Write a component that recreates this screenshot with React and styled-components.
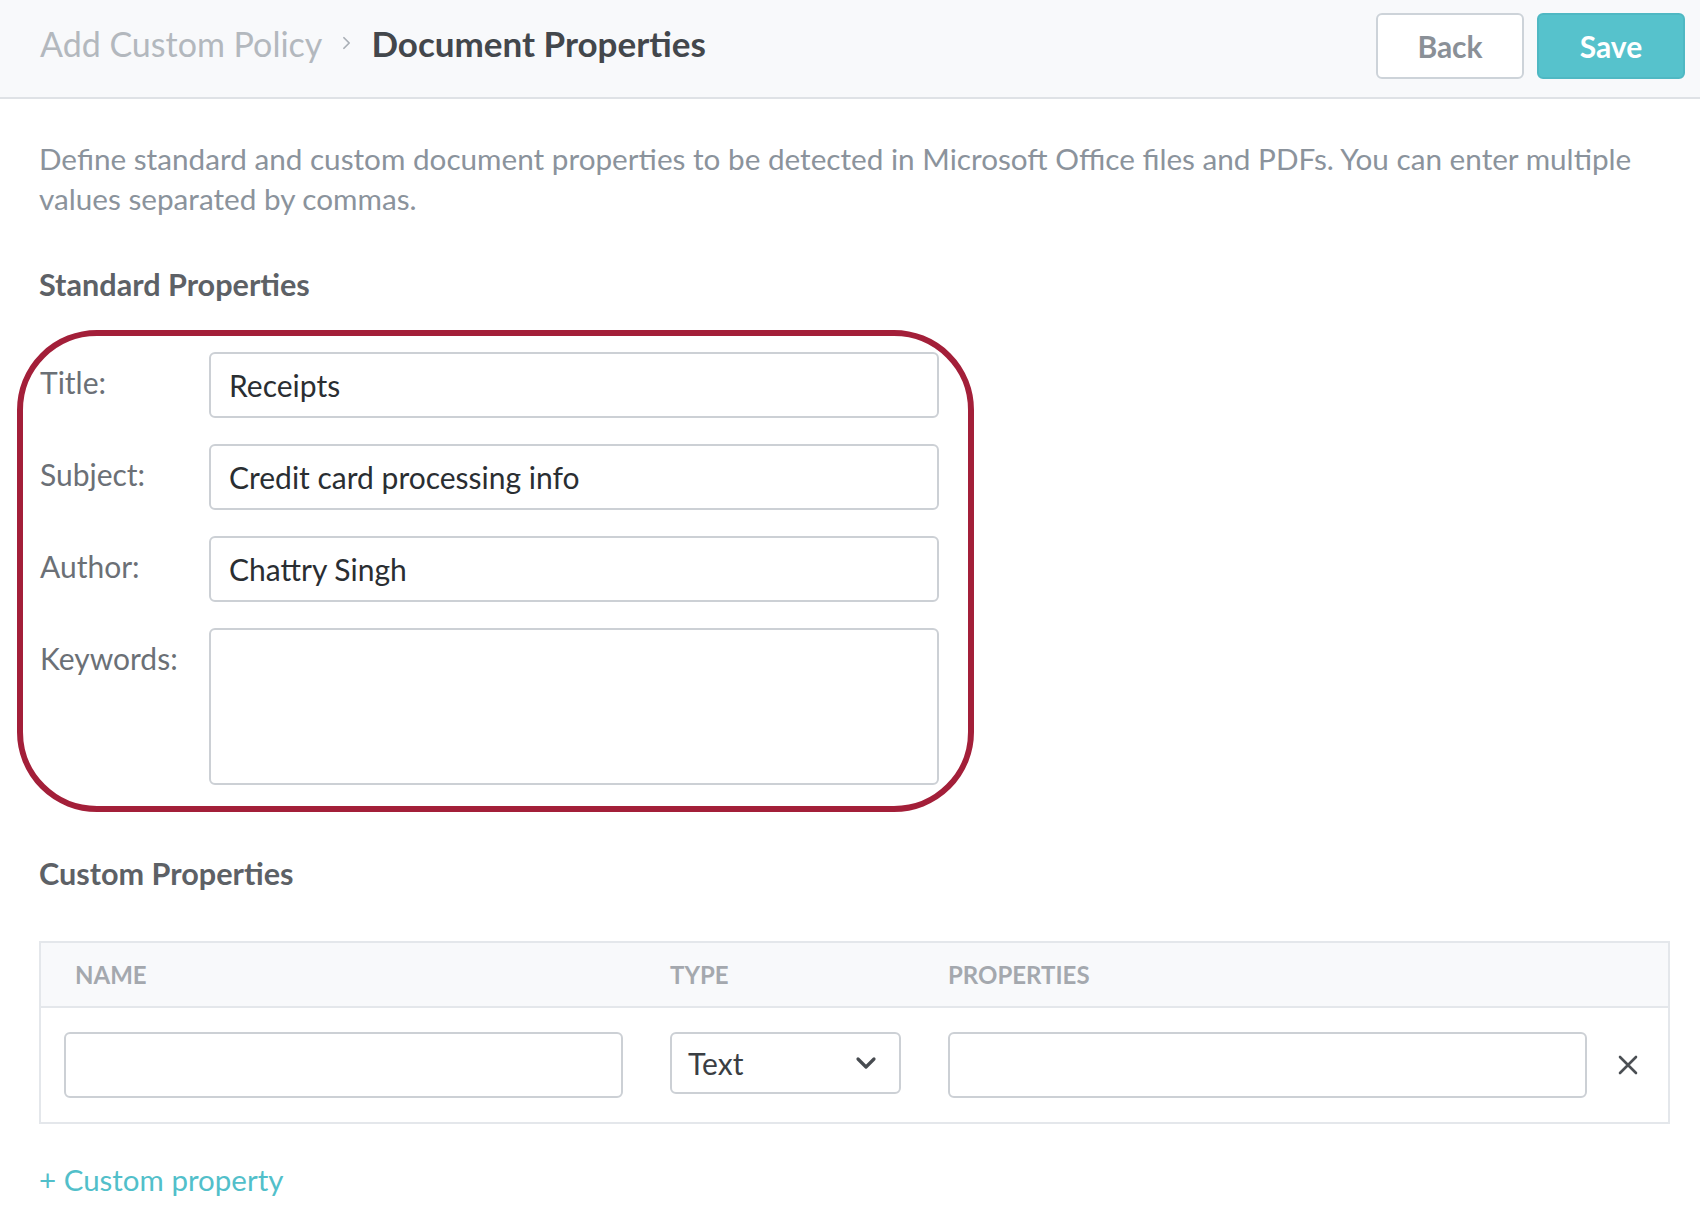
import React from "react";
import styled, { createGlobalStyle } from "styled-components";

const GlobalStyle = createGlobalStyle`
  html, body {
    margin: 0;
    padding: 0;
    background: #ffffff;
    font-family: Lato, "Open Sans", sans-serif;
  }
  * { box-sizing: border-box; }
`;

const Page = styled.div`
  width: 1700px;
  min-height: 1206px;
  background: #fff;
`;

const TopBar = styled.header`
  height: 99px;
  display: flex;
  align-items: center;
  justify-content: space-between;
  padding: 0 15px 6px 40px;
  background: #f8f9fb;
  border-bottom: 2px solid #dfe2e6;
`;

const Crumbs = styled.div`
  display: flex;
  align-items: center;
  gap: 20px;
  font-size: 34px;
  margin-bottom: 5px;
`;

const Crumb = styled.span`
  color: ${p => (p.$current ? "#43474c" : "#b3b8be")};
  font-weight: ${p => (p.$current ? 700 : 400)};
  font-size: ${p => (p.$current ? "35px" : "34px")};
`;

const Actions = styled.div`
  display: flex;
  gap: 13px;
`;

const Button = styled.button`
  width: 148px;
  height: 66px;
  border-radius: 6px;
  font-family: inherit;
  font-size: 30px;
  font-weight: 700;
  cursor: pointer;
  border: 2px solid ${p => (p.$primary ? "#4fb8c3" : "#cdd3d9")};
  background: ${p => (p.$primary ? "#56c2cc" : "#ffffff")};
  color: ${p => (p.$primary ? "#ffffff" : "#8a9097")};
`;

const Content = styled.main`
  padding: 40px 30px 0 39px;
`;

const Intro = styled.p`
  margin: 0;
  font-size: 29.7px;
  line-height: 40px;
  color: #8b939c;
`;

const SectionTitle = styled.h2`
  margin: ${p => p.$top}px 0 0;
  font-size: 30.6px;
  line-height: 40px;
  font-weight: 700;
  color: #5d6166;
`;

const Highlight = styled.div`
  width: 957px;
  margin: 25px 0 0 -22px;
  padding: 16px 29px 21px 17px;
  border: 6px solid #a31f39;
  border-radius: 80px;
`;

const FormGrid = styled.div`
  display: grid;
  grid-template-columns: 169px 730px;
  row-gap: 26px;
`;

const Label = styled.label`
  font-size: 30px;
  line-height: 61px;
  color: #6b7076;
`;

const Field = styled.input`
  width: 100%;
  height: 66px;
  padding: 0 18px;
  border: 2px solid #ccd0d5;
  border-radius: 6px;
  font-family: inherit;
  font-size: 30px;
  color: #2a2e32;
  background: #fff;
  outline: none;
`;

const Area = styled.textarea`
  width: 100%;
  height: 157px;
  padding: 14px 18px;
  border: 2px solid #ccd0d5;
  border-radius: 6px;
  font-family: inherit;
  font-size: 30px;
  resize: none;
  outline: none;
`;

const Table = styled.div`
  margin-top: 47px;
  border: 2px solid #e4e7eb;
`;

const TableRow = styled.div`
  display: grid;
  grid-template-columns: 559px 231px 639px 1fr;
  column-gap: 47px;
  align-items: center;
  padding: 0 0 0 23px;
  height: ${p => (p.$head ? "65px" : "114px")};
  background: ${p => (p.$head ? "#f8f9fb" : "#fff")};
  border-bottom: ${p => (p.$head ? "2px solid #e4e7eb" : "none")};
`;

const HeadCell = styled.div`
  font-size: 24px;
  font-weight: 700;
  color: #a4a8ae;
  text-transform: uppercase;
  padding-left: ${p => p.$indent || 0}px;
`;

const SelectBox = styled.div`
  height: 62px;
  margin-top: -4px;
  display: flex;
  align-items: center;
  justify-content: space-between;
  padding: 0 22px 0 16px;
  border: 2px solid #ccd0d5;
  border-radius: 6px;
  font-size: 30px;
  color: #3a3e43;
`;

const RemoveCell = styled.div`
  margin-left: -47px;
  display: flex;
  justify-content: center;
`;

const RemoveButton = styled.button`
  padding: 0;
  border: none;
  background: none;
  cursor: pointer;
  display: flex;
`;

const AddLink = styled.a`
  display: inline-block;
  margin-top: 36px;
  font-size: 29.5px;
  line-height: 40px;
  color: #52bfca;
  text-decoration: none;
  cursor: pointer;
`;

const Chevron = ({ size = 14, color = "#a9afb6", width = 2 }) => (
  <svg width={size * 0.65} height={size} viewBox="0 0 10 16" fill="none">
    <path d="M2 2l6 6-6 6" stroke={color} strokeWidth={width} strokeLinecap="round" strokeLinejoin="round" />
  </svg>
);

const ChevronDown = () => (
  <svg width="22" height="14" viewBox="0 0 22 14" fill="none">
    <path d="M3 3l8 8 8-8" stroke="#474b50" strokeWidth="3.2" strokeLinecap="round" strokeLinejoin="round" />
  </svg>
);

const CloseIcon = () => (
  <svg width="20" height="20" viewBox="0 0 20 20" fill="none">
    <path d="M2 2l16 16M18 2L2 18" stroke="#4b4f54" strokeWidth="2.6" strokeLinecap="round" />
  </svg>
);

export default function App() {
  return (
    <Page>
      <GlobalStyle />
      <TopBar>
        <Crumbs>
          <Crumb>Add Custom Policy</Crumb>
          <Chevron />
          <Crumb $current>Document Properties</Crumb>
        </Crumbs>
        <Actions>
          <Button>Back</Button>
          <Button $primary>Save</Button>
        </Actions>
      </TopBar>

      <Content>
        <Intro>
          Define standard and custom document properties to be detected in Microsoft Office files and PDFs. You can enter multiple values separated by commas.
        </Intro>

        <SectionTitle $top={46}>Standard Properties</SectionTitle>

        <Highlight>
          <FormGrid>
            <Label>Title:</Label>
            <Field defaultValue="Receipts" />
            <Label>Subject:</Label>
            <Field defaultValue="Credit card processing info" />
            <Label>Author:</Label>
            <Field defaultValue="Chattry Singh" />
            <Label>Keywords:</Label>
            <Area />
          </FormGrid>
        </Highlight>

        <SectionTitle $top={42}>Custom Properties</SectionTitle>

        <Table>
          <TableRow $head>
            <HeadCell $indent={11}>Name</HeadCell>
            <HeadCell>Type</HeadCell>
            <HeadCell>Properties</HeadCell>
            <div />
          </TableRow>
          <TableRow>
            <Field />
            <SelectBox>
              <span>Text</span>
              <ChevronDown />
            </SelectBox>
            <Field />
            <RemoveCell>
              <RemoveButton aria-label="Remove">
                <CloseIcon />
              </RemoveButton>
            </RemoveCell>
          </TableRow>
        </Table>

        <AddLink>+ Custom property</AddLink>
      </Content>
    </Page>
  );
}
